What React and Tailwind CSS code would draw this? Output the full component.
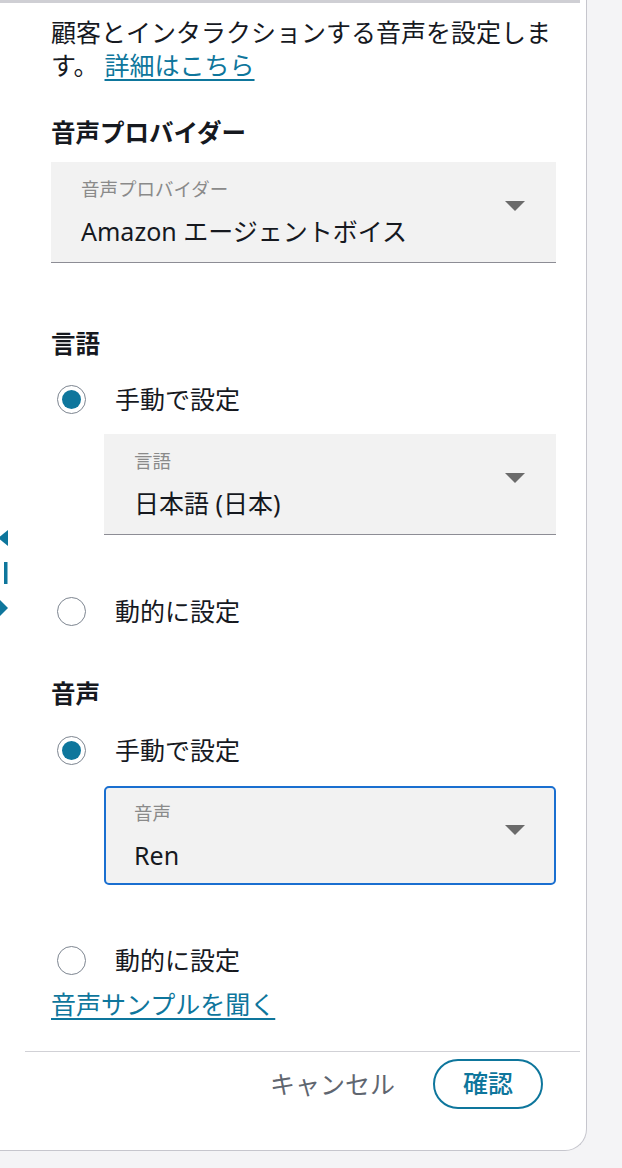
import React from "react";

const font = { fontFamily: '"Noto Sans", "Noto Sans CJK JP", sans-serif' };

// Filled-style select box with floating label and caret
const SelectField = ({ label, value, focused }) => (
  <div
    className={
      "flex items-center bg-[#f2f2f2] " +
      (focused
        ? "h-[99px] border-2 border-[#1a6fd0] rounded-[5px] pl-[28px] pr-[29px]"
        : "h-[101px] border-b border-[#8d8d95] pl-[30px] pr-[31px]")
    }
  >
    <div className="flex-1 flex flex-col">
      <span className="text-[18.5px] leading-[24px] text-[#8a8a8a]">{label}</span>
      <span className="mt-[14px] text-[25px] leading-[32px] text-[#16191f]">{value}</span>
    </div>
    <svg width="20" height="10" viewBox="0 0 20 10" className="mb-[12px]">
      <path d="M0 0h20L10 10z" fill="#6b6b6b" />
    </svg>
  </div>
);

const Radio = ({ checked, label, className = "" }) => (
  <div className={"flex items-center h-[33px] " + className}>
    <span className="ml-[6px] w-[29px] h-[29px] rounded-full border border-[#7d8590] flex items-center justify-center bg-white">
      {checked && <span className="w-[19px] h-[19px] rounded-full bg-[#0e769c]" />}
    </span>
    <span className="ml-[29px] text-[25px] leading-[33px] text-[#16191f]">{label}</span>
  </div>
);

const Heading = ({ children, className = "" }) => (
  <h3 className={"text-[24.5px] leading-[33px] font-bold text-[#16191f] " + className}>{children}</h3>
);

export default function App() {
  return (
    <div className="relative min-h-[1168px] bg-[#f4f4f6] overflow-hidden" style={font}>
      <div className="w-[587px] h-[1151px] bg-white border-r border-b border-[#c6c6cd] rounded-br-[22px] flex flex-col">
        <div className="h-[3px] bg-[#cfcfd4] mr-[6px]" />

        <div className="pt-[13px] pl-[51px] pr-[30px] flex flex-col">
          <p className="text-[25px] leading-[33px] text-[#16191f]">
            顧客とインタラクションする音声を設定します。
            <a href="#" className="ml-[6px] text-[#0e769c] underline underline-offset-[4px] decoration-[2px]">
              詳細はこちら
            </a>
          </p>

          <Heading className="mt-[34px]">音声プロバイダー</Heading>
          <div className="mt-[13px]">
            <SelectField label="音声プロバイダー" value="Amazon エージェントボイス" />
          </div>

          <Heading className="mt-[64px]">言語</Heading>
          <Radio checked label="手動で設定" className="mt-[23px]" />
          <div className="mt-[18px] ml-[53px]">
            <SelectField label="言語" value="日本語 (日本)" />
          </div>
          <Radio label="動的に設定" className="mt-[60px]" />

          <Heading className="mt-[49px]">音声</Heading>
          <Radio checked label="手動で設定" className="mt-[24px]" />
          <div className="mt-[19px] ml-[53px]">
            <SelectField label="音声" value="Ren" focused />
          </div>
          <Radio label="動的に設定" className="mt-[59px]" />

          <a
            href="#"
            className="mt-[11px] self-start text-[25px] leading-[33px] text-[#0e769c] underline underline-offset-[4px] decoration-[2px]"
          >
            音声サンプルを聞く
          </a>
        </div>

        <div className="mt-[30px] ml-[25px] mr-[6px] border-t border-[#d1d1d6]" />
        <div className="mt-[7px] flex items-center justify-end pr-[43px] gap-[38px]">
          <button className="text-[25px] leading-[33px] text-[#5f6670]">キャンセル</button>
          <button className="w-[110px] h-[50px] rounded-full border-2 border-[#0e769c] text-[25px] text-[#0e769c] font-medium">
            確認
          </button>
        </div>
      </div>

      {/* split-panel drag handle peeking in from the left */}
      <svg width="10" height="90" viewBox="0 0 10 90" className="absolute left-0 top-[528px]">
        <path d="M8 2v16L-2 10z" fill="#0e769c" />
        <rect x="4" y="34" width="3.5" height="22" fill="#0e769c" />
        <path d="M0 72v16l8-8z" fill="#0e769c" />
      </svg>
    </div>
  );
}
